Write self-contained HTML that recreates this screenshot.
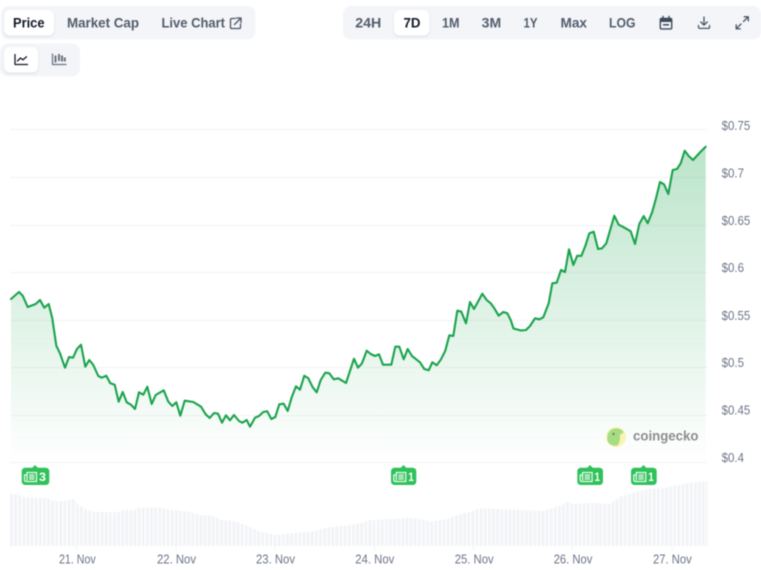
<!DOCTYPE html>
<html><head><meta charset="utf-8"><title>Price chart</title>
<style>
html,body{margin:0;padding:0;background:#fff;width:761px;height:570px;overflow:hidden}
svg{display:block;filter:blur(.4px)}
text{font-family:"Liberation Sans",sans-serif}
.t{font-weight:700;font-size:13.5px;fill:#525c6c}
.a{fill:#111827}
.x{font-size:12.5px;fill:#6b7488}
.y{font-size:12.5px;fill:#6b7488}
.n{font-size:12px;font-weight:700;fill:#fff}
.i{fill:none;stroke:#4b5565;stroke-width:1.3;stroke-linecap:round;stroke-linejoin:round}
.d{fill:none;stroke:#111827;stroke-width:1.3;stroke-linecap:round;stroke-linejoin:round}
.w{fill:none;stroke:#fff;stroke-opacity:.9;stroke-width:1.25}
</style></head><body>
<svg width="761" height="570" viewBox="0 0 761 570" xmlns="http://www.w3.org/2000/svg">
<defs>
<linearGradient id="g" gradientUnits="userSpaceOnUse" x1="0" y1="146" x2="0" y2="462">
<stop offset="0" stop-color="#16a34a" stop-opacity=".29"/>
<stop offset="1" stop-color="#16a34a" stop-opacity="0"/>
</linearGradient>
<pattern id="b" patternUnits="userSpaceOnUse" x="10" y="0" width="4.12" height="570">
<rect x="0" y="0" width="2.9" height="570" fill="#f1f3f6"/>
</pattern>
<filter id="s" x="-20%" y="-20%" width="140%" height="140%"><feDropShadow dx="0" dy="1" stdDeviation="1.2" flood-color="#9aa4b2" flood-opacity=".3"/></filter>
</defs>

<!-- top left tabs -->
<rect x="1" y="6" width="254.500" height="33.500" rx="8" fill="#f3f5f8"/>
<rect x="4" y="10" width="50" height="25.500" rx="6" fill="#fff" filter="url(#s)"/>
<text class="t a" x="13" y="27.500" textLength="31.500" lengthAdjust="spacingAndGlyphs">Price</text>
<text class="t" x="67" y="27.500" textLength="72" lengthAdjust="spacingAndGlyphs">Market Cap</text>
<text class="t" x="161.500" y="27.500" textLength="63.500" lengthAdjust="spacingAndGlyphs">Live Chart</text>
<path class="i" d="M235 18.500h-3.200a1.300 1.300 0 0 0-1.300 1.300v7.400a1.300 1.300 0 0 0 1.300 1.300h7.400a1.300 1.300 0 0 0 1.300-1.300V24M234.500 24.500L240.500 18.500M236.500 18h4.500v4.500"/>

<!-- chart type group -->
<rect x="0" y="43.500" width="80" height="33" rx="8" fill="#f3f5f8"/>
<rect x="4" y="47" width="34" height="25.500" rx="6" fill="#fff" filter="url(#s)"/>
<path class="d" d="M15 54.500v10h12.500M17.500 61l3-3 2.500 1.800 3.500-3"/>
<path class="i" stroke-opacity=".8" d="M52.500 54v10.500H66"/>
<path d="M55.500 55.500v7M59 54v7M62 55.500v6M64.800 57.500v4" fill="none" stroke="#4b5565" stroke-opacity=".85" stroke-width="1.900"/>

<!-- top right group -->
<rect x="343" y="6" width="418" height="33.500" rx="8" fill="#f3f5f8"/>
<rect x="394" y="10" width="35.500" height="25.500" rx="6" fill="#fff" filter="url(#s)"/>
<text class="t" x="355.300" y="27.500" textLength="26" lengthAdjust="spacingAndGlyphs">24H</text>
<text class="t a" x="403.500" y="27.500" textLength="17" lengthAdjust="spacingAndGlyphs">7D</text>
<text class="t" x="442" y="27.500" textLength="17.500" lengthAdjust="spacingAndGlyphs">1M</text>
<text class="t" x="481.700" y="27.500" textLength="19.500" lengthAdjust="spacingAndGlyphs">3M</text>
<text class="t" x="523.500" y="27.500" textLength="14" lengthAdjust="spacingAndGlyphs">1Y</text>
<text class="t" x="560.500" y="27.500" textLength="26.500" lengthAdjust="spacingAndGlyphs">Max</text>
<text class="t" x="609" y="27.500" textLength="26.500" lengthAdjust="spacingAndGlyphs">LOG</text>
<!-- calendar -->
<path d="M661.500 18.500h9a1.200 1.200 0 0 1 1.200 1.200v8a1.200 1.200 0 0 1-1.200 1.200h-9a1.200 1.200 0 0 1-1.200-1.200v-8a1.200 1.200 0 0 1 1.200-1.200z" fill="none" stroke="#3f4a5a" stroke-width="1.400"/>
<path d="M660.500 18.500h11v3.500h-11z" fill="#3f4a5a"/>
<path d="M663 16.500v2.500M669 16.500v2.500" stroke="#3f4a5a" stroke-width="1.400" stroke-linecap="round"/>
<path d="M663 24.800h6" stroke="#3f4a5a" stroke-width="1.500"/>
<!-- download -->
<path class="i" d="M704 17v8M700.800 22l3.200 3.200 3.200-3.200M698.500 25.500v1.600a1.300 1.300 0 0 0 1.300 1.300h8.400a1.300 1.300 0 0 0 1.300-1.300v-1.600"/>
<!-- expand -->
<path class="i" d="M743.500 21.500l4.700-4.600M744.200 16.800h4.100v4.100M741 24l-4.700 4.700M736.200 24.800v4.100h4.100"/>

<!-- grid -->
<g stroke="#f2f3f5" stroke-width="1">
<path d="M10 129.500H707.500M10 177.500H707.500M10 225.500H707.500M10 272.500H707.500M10 320.500H707.500M10 367.500H707.500M10 415.500H707.500M10 462.500H707.500"/>
</g>

<!-- area -->
<path fill="url(#g)" d="M11 299L19 292L22.700 295.700L27.700 307L35.700 304L40 300L44.300 307.700L48.700 304L52.300 318.300L56.300 345.700L60 353.300L65 367.700L69 357L73 357.700L77 349L81 344.700L85.300 366.700L89.300 360L93.300 365L98.300 376L101.700 377.700L106.300 375.700L110.300 383.300L114.700 384.700L118.700 401.700L122.700 392L126.700 402.300L131 404.700L135 409L139 392.300L143.300 394.700L147.300 386.700L151.700 404L155.700 395L163.700 390.300L168.300 401.700L172.300 406L176.300 402.300L180.300 415.700L184.700 400.700L193.300 402L201 406.700L205.700 414.300L209.700 418L214 413L218 413.700L222 422.700L226 415.300L230 420.300L234 415L239 421L242.300 422.700L246.700 420L250 426.700L255 417.700L259 416L263.300 412L267.300 411.300L271.300 419L275.300 417L279.300 404.300L283.700 403.700L287.700 411L291.700 397.300L296 386.300L300 389.700L304.300 375.700L308.300 378.300L312.700 387.300L316.700 392.300L320.700 380L325.300 372.700L329.300 373.300L333.700 379.300L338.300 378.300L346 383L354 358.700L358 367.700L362 363.300L366.700 350.700L370.700 354L375 356L379 354.300L383 364.700L391.300 364.700L395.300 346.700L399.300 346.700L403.700 359.300L407.700 349L412 356L420 362.300L424.300 369L428.700 370.300L432.300 362.300L436.700 365.300L441 359.300L445.300 350.700L449.300 335.300L453.300 336L457.300 310.700L461.300 311.700L466 323.300L470 302L474 309L482.300 293.700L486.700 300L490.700 303.300L494.300 308.300L498.700 315.700L503.300 312L507.300 313.300L510.700 320L513.500 328.500L521 330.500L526 330L530 326L535 318.300L539.300 319.300L543.300 317.300L548.700 303.300L552.300 283.300L556.700 282.700L561 270L565 272L569 249.300L573.300 265L577.300 255.700L581.300 256L585.300 246L589.300 233.300L593.700 231.700L598 249L602 248.300L606.300 243.300L614.300 215.700L618.700 224.700L622.700 226.700L630.700 231.300L635 244L639.300 224L643.700 216L647.700 223.300L652.300 211.700L656 198.300L660 182L664 184.300L668.300 194L672.700 170L677 169L680.700 163.300L684.700 150.700L688.700 156L693 160L701.300 151L705.700 146.700L705.700 462L11 462Z"/>
<path fill="none" stroke="#1aa34c" stroke-width="2.100" stroke-linejoin="round" stroke-linecap="round" d="M11 299L19 292L22.700 295.700L27.700 307L35.700 304L40 300L44.300 307.700L48.700 304L52.300 318.300L56.300 345.700L60 353.300L65 367.700L69 357L73 357.700L77 349L81 344.700L85.300 366.700L89.300 360L93.300 365L98.300 376L101.700 377.700L106.300 375.700L110.300 383.300L114.700 384.700L118.700 401.700L122.700 392L126.700 402.300L131 404.700L135 409L139 392.300L143.300 394.700L147.300 386.700L151.700 404L155.700 395L163.700 390.300L168.300 401.700L172.300 406L176.300 402.300L180.300 415.700L184.700 400.700L193.300 402L201 406.700L205.700 414.300L209.700 418L214 413L218 413.700L222 422.700L226 415.300L230 420.300L234 415L239 421L242.300 422.700L246.700 420L250 426.700L255 417.700L259 416L263.300 412L267.300 411.300L271.300 419L275.300 417L279.300 404.300L283.700 403.700L287.700 411L291.700 397.300L296 386.300L300 389.700L304.300 375.700L308.300 378.300L312.700 387.300L316.700 392.300L320.700 380L325.300 372.700L329.300 373.300L333.700 379.300L338.300 378.300L346 383L354 358.700L358 367.700L362 363.300L366.700 350.700L370.700 354L375 356L379 354.300L383 364.700L391.300 364.700L395.300 346.700L399.300 346.700L403.700 359.300L407.700 349L412 356L420 362.300L424.300 369L428.700 370.300L432.300 362.300L436.700 365.300L441 359.300L445.300 350.700L449.300 335.300L453.300 336L457.300 310.700L461.300 311.700L466 323.300L470 302L474 309L482.300 293.700L486.700 300L490.700 303.300L494.300 308.300L498.700 315.700L503.300 312L507.300 313.300L510.700 320L513.500 328.500L521 330.500L526 330L530 326L535 318.300L539.300 319.300L543.300 317.300L548.700 303.300L552.300 283.300L556.700 282.700L561 270L565 272L569 249.300L573.300 265L577.300 255.700L581.300 256L585.300 246L589.300 233.300L593.700 231.700L598 249L602 248.300L606.300 243.300L614.300 215.700L618.700 224.700L622.700 226.700L630.700 231.300L635 244L639.300 224L643.700 216L647.700 223.300L652.300 211.700L656 198.300L660 182L664 184.300L668.300 194L672.700 170L677 169L680.700 163.300L684.700 150.700L688.700 156L693 160L701.300 151L705.700 146.700"/>

<!-- y labels -->
<g>
<text class="y" x="721.600" y="130.200" textLength="28.600" lengthAdjust="spacingAndGlyphs">$0.75</text>
<text class="y" x="721.600" y="177.600" textLength="22.400" lengthAdjust="spacingAndGlyphs">$0.7</text>
<text class="y" x="721.600" y="224.800" textLength="28.600" lengthAdjust="spacingAndGlyphs">$0.65</text>
<text class="y" x="721.600" y="272.200" textLength="22.400" lengthAdjust="spacingAndGlyphs">$0.6</text>
<text class="y" x="721.600" y="319.800" textLength="28.600" lengthAdjust="spacingAndGlyphs">$0.55</text>
<text class="y" x="721.600" y="367.200" textLength="22.400" lengthAdjust="spacingAndGlyphs">$0.5</text>
<text class="y" x="721.600" y="414.600" textLength="28.600" lengthAdjust="spacingAndGlyphs">$0.45</text>
<text class="y" x="721.600" y="462" textLength="22.400" lengthAdjust="spacingAndGlyphs">$0.4</text>
</g>

<!-- coingecko -->
<circle cx="616" cy="437" r="10" fill="#f8f4b4"/>
<path d="M608 442c-2-6 .5-12.500 6.500-13.500 4.500-.5 8 1 9 4-1 1.200-2.800 1.500-3.800 2.500 .8 3.800 0 7.500-2.400 10.500-3.300 .8-7.300-.5-9.300-3.500z" fill="#a6dc82"/>
<circle cx="613.500" cy="434" r="1.200" fill="#6d8a62"/>
<text x="633" y="440.500" font-size="13.500" font-weight="700" fill="#8c8c8c" textLength="65.500" lengthAdjust="spacingAndGlyphs">coingecko</text>

<!-- volume -->
<path fill="url(#b)" d="M10 546V494.300L19 494.300L23 497L35 497.700L48 498.300L53 501L65 501L71.700 499.300L75 499.300L78 505L85 509L92 511.700L117 512.300L123 510L133 510.300L138 508L160 507.300L167 509.300L190 512L200 515L213 515.700L222 520L233 520.700L243 524L250 527L260 531.700L275 535L293 533L310 531.700L327 527.700L350 525L363 522.700L368 520.300L393 519L407 518L420 519L430 521.700L447 519.300L458 515L470 511.700L480 508.300L500 509L543 511L557 506.700L568 501.700L573 504.300L593 502.700L610 504L620 497L633 492.700L647 489.300L663 488L667 487.300L690 482.700L707.500 481V546Z"/>
<path d="M76.500 546v5M176 546v5M275 546v5M374.500 546v5M473.500 546v5M572.500 546v5M672 546v5" stroke="#f2f3f5" stroke-width="1"/>

<!-- x labels -->
<text class="x" x="59" y="563.300" textLength="36.700" lengthAdjust="spacingAndGlyphs">21. Nov</text>
<text class="x" x="157" y="563.300" textLength="39" lengthAdjust="spacingAndGlyphs">22. Nov</text>
<text class="x" x="256" y="563.300" textLength="39" lengthAdjust="spacingAndGlyphs">23. Nov</text>
<text class="x" x="355.300" y="563.300" textLength="39" lengthAdjust="spacingAndGlyphs">24. Nov</text>
<text class="x" x="454.700" y="563.300" textLength="39" lengthAdjust="spacingAndGlyphs">25. Nov</text>
<text class="x" x="553.700" y="563.300" textLength="38.700" lengthAdjust="spacingAndGlyphs">26. Nov</text>
<text class="x" x="653" y="563.300" textLength="38.700" lengthAdjust="spacingAndGlyphs">27. Nov</text>

<!-- news badges -->
<g>
<rect x="21.700" y="467.700" width="27.600" height="17.300" rx="3.500" fill="#2fc15a"/><path d="M32 468l3-3 3 3z" fill="#2fc15a"/>
<path class="w" d="M27 472.500h9.500v9H26a1.500 1.500 0 0 1-1.500-1.500v-5h2.500zM27 473v7.500M29 475h5.500M29 477h5.500M29 479h5.500"/>
<text class="n" x="39" y="481" textLength="7" lengthAdjust="spacingAndGlyphs">3</text>

<rect x="391" y="467.700" width="25.300" height="17.300" rx="3.500" fill="#2fc15a"/><path d="M400.500 468l3-3 3 3z" fill="#2fc15a"/>
<path class="w" d="M396.300 472.500h9.500v9h-10.500a1.500 1.500 0 0 1-1.500-1.500v-5h2.500zM396.300 473v7.500M398.300 475h5.500M398.300 477h5.500M398.300 479h5.500"/>
<text class="n" x="408.200" y="481" textLength="5.500" lengthAdjust="spacingAndGlyphs">1</text>

<rect x="577.300" y="467.700" width="25.700" height="17.300" rx="3.500" fill="#2fc15a"/><path d="M587 468l3-3 3 3z" fill="#2fc15a"/>
<path class="w" d="M582.600 472.500h9.500v9h-10.500a1.500 1.500 0 0 1-1.500-1.500v-5h2.500zM582.600 473v7.500M584.600 475h5.500M584.600 477h5.500M584.600 479h5.500"/>
<text class="n" x="594.500" y="481" textLength="5.500" lengthAdjust="spacingAndGlyphs">1</text>

<rect x="631" y="467.700" width="25.700" height="17.300" rx="3.500" fill="#2fc15a"/><path d="M640.500 468l3-3 3 3z" fill="#2fc15a"/>
<path class="w" d="M636.300 472.500h9.500v9h-10.500a1.500 1.500 0 0 1-1.500-1.500v-5h2.500zM636.300 473v7.500M638.300 475h5.500M638.300 477h5.500M638.300 479h5.500"/>
<text class="n" x="648.200" y="481" textLength="5.500" lengthAdjust="spacingAndGlyphs">1</text>
</g>
</svg>
</body></html>
